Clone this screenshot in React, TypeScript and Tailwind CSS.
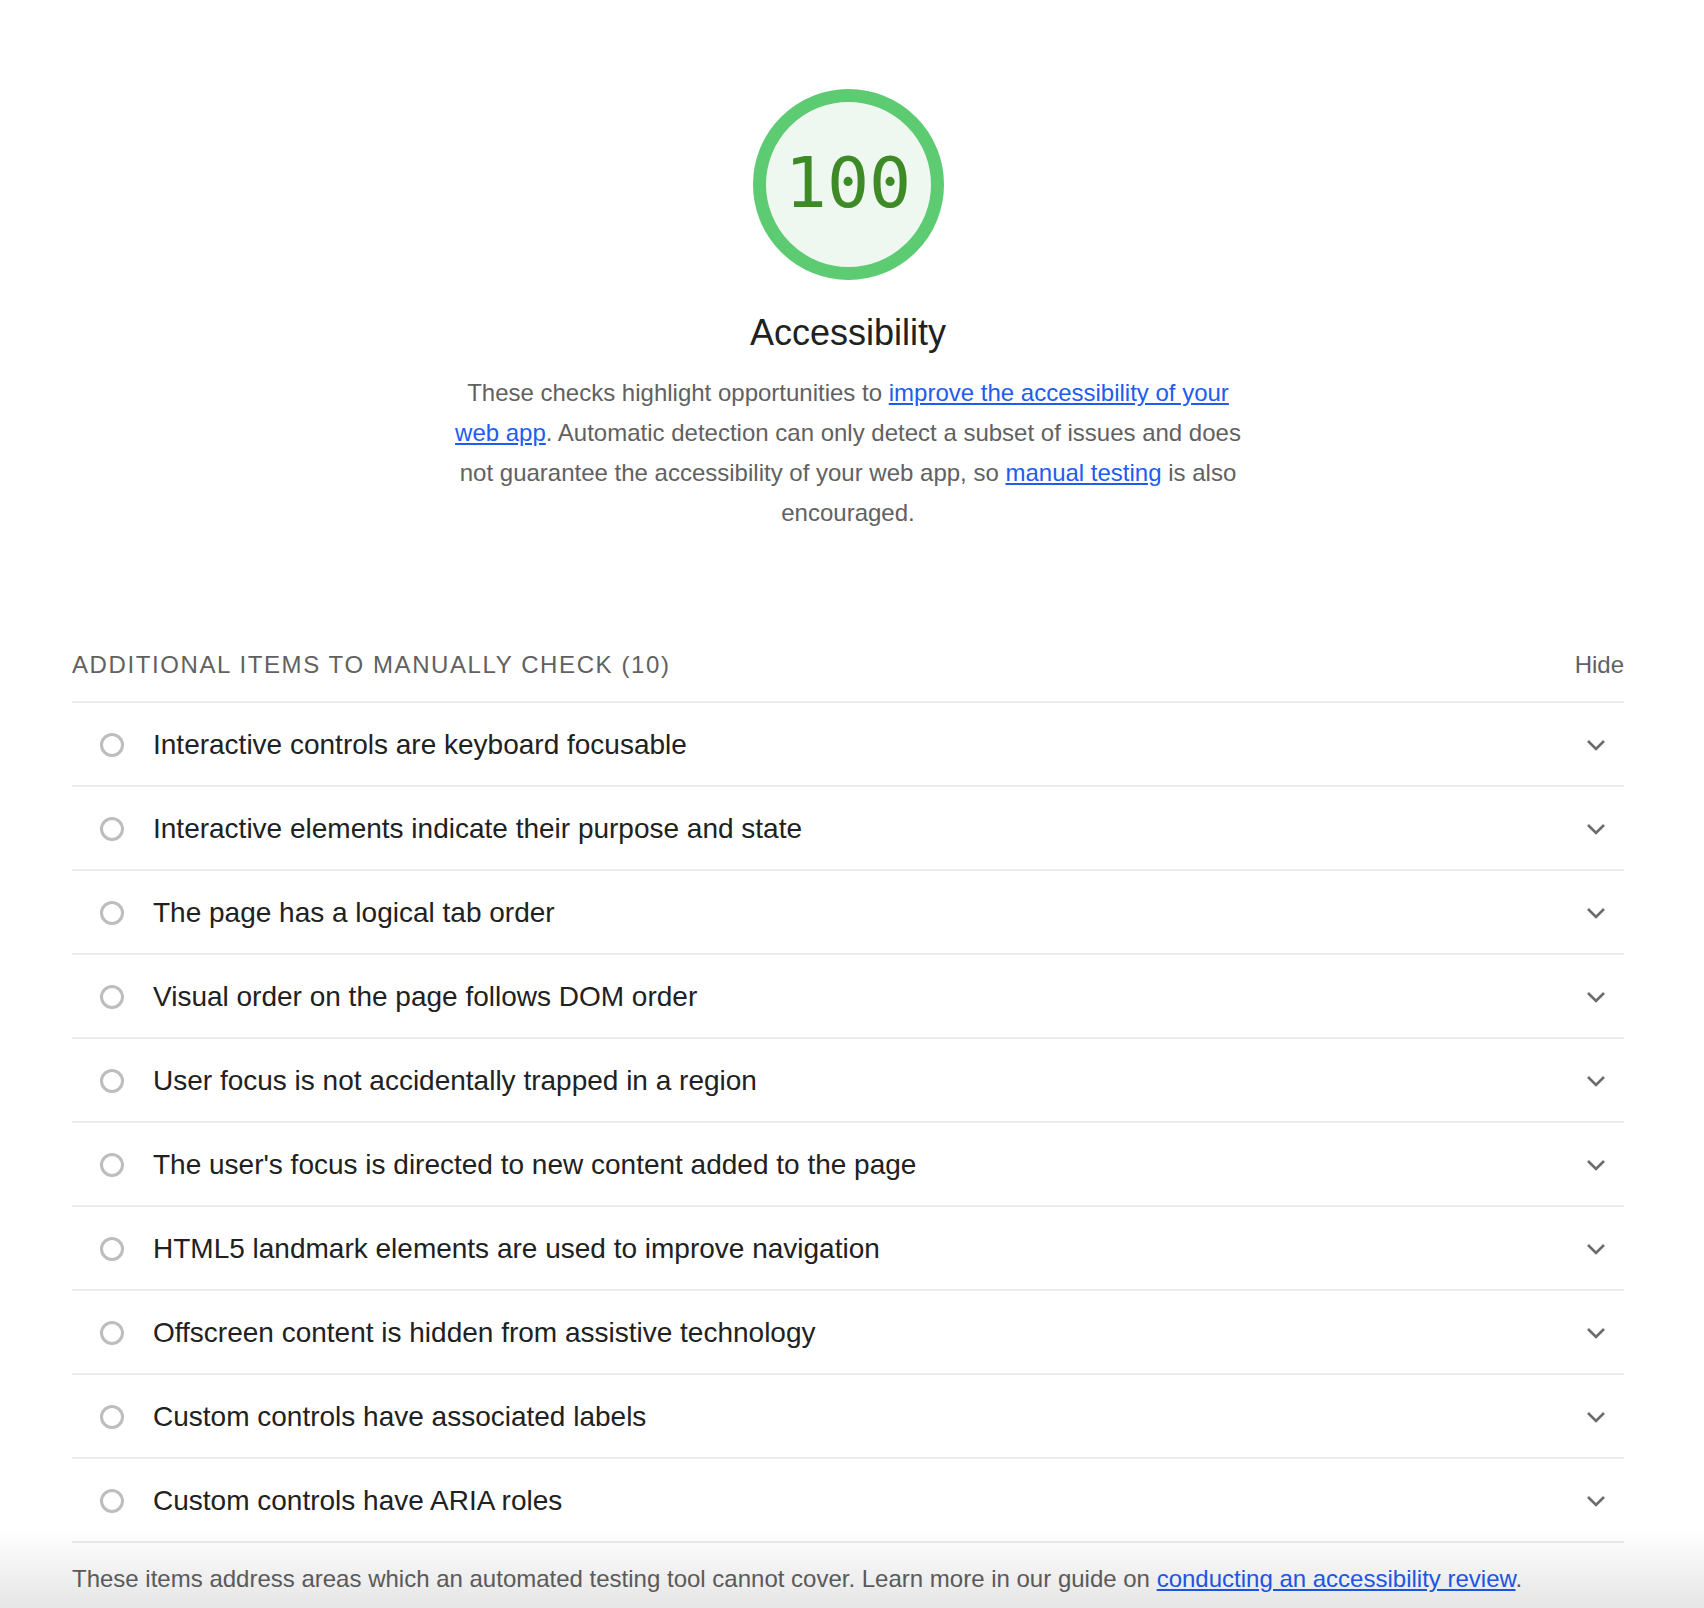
import React from "react";

const sans = "font-['Liberation_Sans',Arial,sans-serif]";

const audits = [
  "Interactive controls are keyboard focusable",
  "Interactive elements indicate their purpose and state",
  "The page has a logical tab order",
  "Visual order on the page follows DOM order",
  "User focus is not accidentally trapped in a region",
  "The user's focus is directed to new content added to the page",
  "HTML5 landmark elements are used to improve navigation",
  "Offscreen content is hidden from assistive technology",
  "Custom controls have associated labels",
  "Custom controls have ARIA roles",
];

// Score ring — the big green circle with the number in it.
function Gauge({ score }: { score: number }) {
  return (
    <div className="relative h-[191px] w-[191px]">
      <svg viewBox="0 0 191 191" className="absolute inset-0 h-full w-full">
        <circle cx="95.5" cy="95.5" r="89" fill="#eef8f1" stroke="#5ccb71" strokeWidth="13" />
      </svg>
      <div className="absolute inset-0 flex items-center justify-center pb-[4px] font-['DejaVu_Sans_Mono',monospace] text-[70px] leading-none text-[#3e8a26]">
        {score}
      </div>
    </div>
  );
}

function Chevron() {
  return (
    <svg width="20" height="13" viewBox="0 0 20 13" fill="none">
      <polyline points="2,2 10,10 18,2" stroke="#6b6b6b" strokeWidth="2.6" />
    </svg>
  );
}

function AuditRow({ title }: { title: string }) {
  return (
    <div className="flex h-[84px] items-center border-b-2 border-[#ececec] pt-[2px]">
      <span className="ml-[28px] h-[24px] w-[24px] shrink-0 rounded-full border-[3px] border-[#bdbdbd]" />
      <span className="ml-[29px] text-[28px] text-[#212121]">{title}</span>
      <span className="ml-auto mr-[18px] flex">
        <Chevron />
      </span>
    </div>
  );
}

export default function App() {
  return (
    <div className={`relative min-h-screen overflow-hidden bg-white ${sans}`}>
      <div className="ml-[72px] w-[1552px] pt-[89px]">
        <div className="flex flex-col items-center">
          <Gauge score={100} />
          <h1 className="mt-[31px] text-[36px] leading-[43px] text-[#212121]">Accessibility</h1>
          <p className="mt-[19px] w-[800px] text-center text-[24px] leading-[40px] text-[#616161]">
            These checks highlight opportunities to{" "}
            <a href="#" className="text-[#215cf0] underline underline-offset-2">
              improve the accessibility of your web app
            </a>
            . Automatic detection can only detect a subset of issues and does not guarantee the
            accessibility of your web app, so{" "}
            <a href="#" className="text-[#215cf0] underline underline-offset-2">
              manual testing
            </a>{" "}
            is also encouraged.
          </p>
        </div>

        <div className="mt-[116px] flex items-center border-b-2 border-[#ececec] pb-[20px] text-[24px] leading-[32px] text-[#616161]">
          <span className="tracking-[1.6px]">ADDITIONAL ITEMS TO MANUALLY CHECK (10)</span>
          <span className="ml-auto">Hide</span>
        </div>

        {audits.map((a) => (
          <AuditRow key={a} title={a} />
        ))}

        <p className="mt-[20px] text-[24px] leading-[32px] text-[#616161]">
          These items address areas which an automated testing tool cannot cover. Learn more in our
          guide on{" "}
          <a href="#" className="text-[#215cf0] underline underline-offset-2">
            conducting an accessibility review
          </a>
          .
        </p>
      </div>

      {/* soft shade along the bottom edge of the window */}
      <div className="pointer-events-none fixed inset-x-0 bottom-0 h-[80px] bg-gradient-to-b from-black/0 to-black/10" />
    </div>
  );
}
